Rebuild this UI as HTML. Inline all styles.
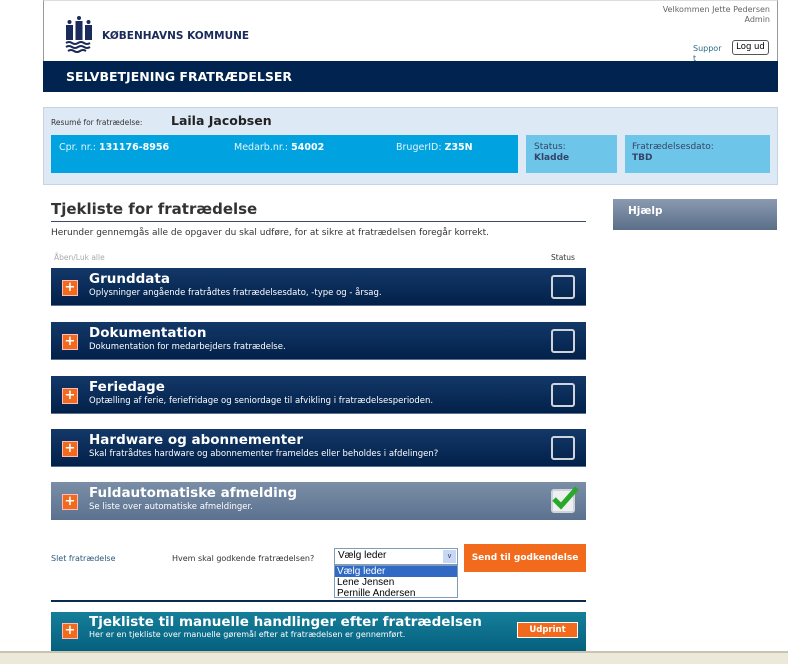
<!DOCTYPE html>
<html><head><meta charset="utf-8"><style>
*{margin:0;padding:0;box-sizing:border-box}
body{width:788px;height:664px;position:relative;background:#fff;font-family:"DejaVu Sans","Liberation Sans",sans-serif;overflow:hidden;color:#333}
.a{position:absolute}
.row{position:absolute;left:51px;width:535px;height:38px;background:linear-gradient(#133868,#02214a);border-bottom:1px solid #5a7090}
.row .p{position:absolute;left:11px;top:12px;width:16px;height:16px;background:#f26a1b;border:1px solid #fbb;color:#fff;font-weight:bold;font-size:13px;line-height:13px;text-align:center}
.row .t{position:absolute;left:38px;top:3px;color:#fff;font-weight:bold;font-size:13.5px}
.row .s{position:absolute;left:38px;top:20px;color:#fff;font-size:8.5px}
.row .c{position:absolute;right:11px;top:7px;width:24px;height:24px;border:2px solid #d0d4da;border-radius:3px}
</style></head><body>
<div class="a" style="left:43px;top:0;width:735px;height:92px;border-left:1px solid #999;border-right:1px solid #999;border-top:1px solid #ddd"></div>
<svg class="a" style="left:65px;top:15px" width="28" height="38" viewBox="0 0 28 38"><g fill="#1a2a5a"><rect x="1" y="10" width="7" height="15"/><rect x="10.5" y="6" width="7" height="19"/><rect x="20" y="10" width="7" height="15"/><circle cx="4.5" cy="7" r="2"/><circle cx="14" cy="3" r="2"/><circle cx="23.5" cy="7" r="2"/></g><g stroke="#1a2a5a" stroke-width="2" fill="none"><path d="M1 28q3-2 6 0t6 0 6 0 6 0"/><path d="M1 32q3-2 6 0t6 0 6 0 6 0"/><path d="M3 36q3-2 6 0t6 0 6 0"/></g></svg>
<div class="a" style="left:102px;top:30px;font-weight:bold;font-size:10.5px;color:#1a2a5a">KØBENHAVNS KOMMUNE</div>
<div class="a" style="left:600px;top:5px;width:170px;text-align:right;font-size:8px;color:#666;line-height:10px">Velkommen Jette Pedersen<br>Admin</div>
<div class="a" style="left:693px;top:44px;font-size:8px;color:#2a6a8a;width:32px;line-height:10px;word-break:break-all">Suppor t</div>
<div class="a" style="left:732px;top:40px;width:37px;height:15px;border:1px solid #555;border-radius:3px;font-size:8.5px;text-align:center;line-height:13px;color:#000">Log ud</div>
<div class="a" style="left:43px;top:61px;width:735px;height:31px;background:#01234f"></div>
<div class="a" style="left:66px;top:69px;color:#fff;font-weight:bold;font-size:12.5px">SELVBETJENING FRATRÆDELSER</div>
<div class="a" style="left:43px;top:107px;width:735px;height:78px;background:#dde9f5;border:1px solid #c8d4e0"></div>
<div class="a" style="left:51px;top:118px;font-size:7.5px;color:#333">Resumé for fratrædelse:</div>
<div class="a" style="left:171px;top:113px;font-size:12.5px;font-weight:bold;color:#222">Laila Jacobsen</div>
<div class="a" style="left:51px;top:135px;width:467px;height:38px;background:#00a3e0"></div>
<div class="a" style="left:59px;top:142px;font-size:9.5px;color:#e4f4fc">Cpr. nr.: <b style="color:#fff">131176-8956</b></div>
<div class="a" style="left:234px;top:142px;font-size:9.5px;color:#e4f4fc">Medarb.nr.: <b style="color:#fff">54002</b></div>
<div class="a" style="left:396px;top:142px;font-size:9.5px;color:#e4f4fc">BrugerID: <b style="color:#fff">Z35N</b></div>
<div class="a" style="left:526px;top:135px;width:91px;height:38px;background:#6dc6ea;padding:7px 8px;font-size:9px;color:#346;line-height:11px">Status:<br><b>Kladde</b></div>
<div class="a" style="left:625px;top:135px;width:145px;height:38px;background:#6dc6ea;padding:7px 7px;font-size:9px;color:#346;line-height:11px">Fratrædelsesdato:<br><b>TBD</b></div>
<div class="a" style="left:51px;top:200px;font-size:15px;font-weight:bold;color:#333">Tjekliste for fratrædelse</div>
<div class="a" style="left:51px;top:221px;width:535px;height:1px;background:#3a4a6a"></div>
<div class="a" style="left:51px;top:228px;font-size:9px;color:#333">Herunder gennemgås alle de opgaver du skal udføre, for at sikre at fratrædelsen foregår korrekt.</div>
<div class="a" style="left:54px;top:253px;font-size:7.5px;color:#aaa">Åben/Luk alle</div>
<div class="a" style="left:551px;top:253px;font-size:7.5px;color:#333">Status</div>
<div class="row" style="top:268px"><div class="p">+</div><div class="t">Grunddata</div><div class="s">Oplysninger angående fratrådtes fratrædelsesdato, -type og - årsag.</div><div class="c"></div></div>
<div class="row" style="top:322px"><div class="p">+</div><div class="t">Dokumentation</div><div class="s">Dokumentation for medarbejders fratrædelse.</div><div class="c"></div></div>
<div class="row" style="top:376px"><div class="p">+</div><div class="t">Feriedage</div><div class="s">Optælling af ferie, feriefridage og seniordage til afvikling i fratrædelsesperioden.</div><div class="c"></div></div>
<div class="row" style="top:429px"><div class="p">+</div><div class="t">Hardware og abonnementer</div><div class="s">Skal fratrådtes hardware og abonnementer frameldes eller beholdes i afdelingen?</div><div class="c"></div></div>
<div class="row" style="top:482px;background:linear-gradient(#7a8ea6,#5c7290)"><div class="p">+</div><div class="t">Fuldautomatiske afmelding</div><div class="s">Se liste over automatiske afmeldinger.</div><div class="c" style="background:#eef0f2"><svg width="28" height="26" viewBox="0 0 28 26" style="position:absolute;left:-2px;top:-6px"><path d="M3 14l7 7L26 3" stroke="#2aa82a" stroke-width="5" fill="none"/></svg></div></div>
<div class="a" style="left:51px;top:554px;font-size:8px;color:#2a5a7a">Slet fratrædelse</div>
<div class="a" style="left:172px;top:554px;font-size:8px;color:#333">Hvem skal godkende fratrædelsen?</div>
<div class="a" style="left:334px;top:548px;width:124px;height:17px;border:1px solid #7f9db9;background:#fff;font-size:10px;padding:1px 3px;color:#000;font-family:'Liberation Sans',sans-serif">Vælg leder<span style="position:absolute;right:1px;top:1px;width:13px;height:13px;background:#c8d8f4;font-size:7px;text-align:center;line-height:13px;color:#335">v</span></div>
<div class="a" style="left:334px;top:565px;width:124px;height:33px;border:1px solid #7f9db9;background:#fff;font-size:10px;line-height:11px;color:#000;font-family:'Liberation Sans',sans-serif"><div style="background:#316ac5;color:#fff;padding-left:2px">Vælg leder</div><div style="padding-left:2px">Lene Jensen</div><div style="padding-left:2px">Pernille Andersen</div></div>
<div class="a" style="left:464px;top:544px;width:122px;height:28px;background:#f26a1b;color:#fff;font-weight:bold;font-size:9px;text-align:center;line-height:28px">Send til godkendelse</div>
<div class="a" style="left:51px;top:600px;width:535px;height:2px;background:#0a2a50"></div>
<div class="a" style="left:51px;top:612px;width:535px;height:39px;background:linear-gradient(#157f9a,#05607e)"></div>
<div class="a" style="left:62px;top:623px;width:16px;height:16px;background:#f26a1b;border:1px solid #fbb;color:#fff;font-weight:bold;font-size:13px;line-height:13px;text-align:center">+</div>
<div class="a" style="left:89px;top:614px;color:#fff;font-weight:bold;font-size:13.5px">Tjekliste til manuelle handlinger efter fratrædelsen</div>
<div class="a" style="left:89px;top:630px;color:#fff;font-size:8px">Her er en tjekliste over manuelle gøremål efter at fratrædelsen er gennemført.</div>
<div class="a" style="left:517px;top:622px;width:61px;height:16px;background:#f26a1b;border:1px solid #fff;color:#fff;font-weight:bold;font-size:8.5px;text-align:center;line-height:14px">Udprint</div>
<div class="a" style="left:613px;top:199px;width:164px;height:31px;background:linear-gradient(#8a9ab0,#5a6e88);color:#fff;font-weight:bold;font-size:10.5px;padding:6px 15px">Hjælp</div>
<div class="a" style="left:0;top:651px;width:788px;height:13px;background:#ece9d8;border-top:2px solid #c8c4b4"></div>
</body></html>
